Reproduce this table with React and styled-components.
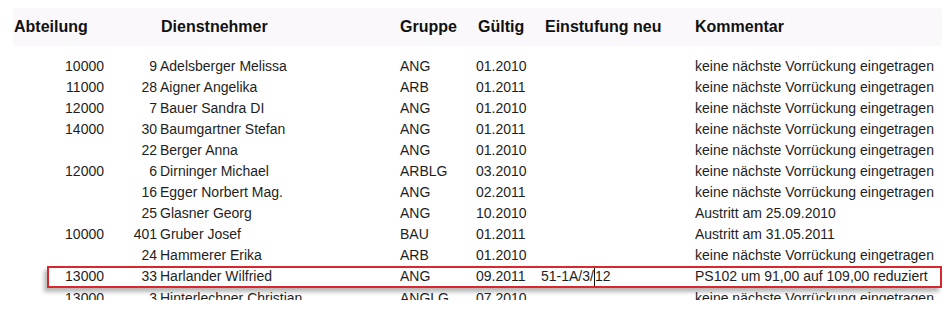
import React from "react";
import styled, { createGlobalStyle } from "styled-components";

const Global = createGlobalStyle`
  html, body { margin: 0; padding: 0; background: #ffffff; }
  body { font-family: "Liberation Sans", Arial, sans-serif; }
`;

const COLS = "91px 53px 243px 76px 65px 154px 1fr";

const Page = styled.div`
  width: 949px;
  height: 300px;
  overflow: hidden;
  padding: 8px 7px 0 13px;
  box-sizing: border-box;
`;

const Header = styled.div`
  display: grid;
  grid-template-columns: ${COLS};
  height: 38px;
  align-items: center;
  background: #fbf8fb;
  font-weight: bold;
  font-size: 16px;
  color: #111111;
`;

const HeadCell = styled.div`
  padding-left: ${(p) => p.$pad || 0}px;
  grid-column: ${(p) => p.$span || "auto"};
  white-space: nowrap;
  padding-bottom: 1px;
`;

const Body = styled.div`
  padding-top: 9.5px;
`;

const Row = styled.div`
  position: relative;
  display: grid;
  grid-template-columns: ${COLS};
  height: 21.1px;
  line-height: 21.1px;
  font-size: 14px;
  color: #1e1e1e;
  white-space: nowrap;

  ${(p) =>
    p.$marked &&
    `
    &::after {
      content: "";
      position: absolute;
      top: 0;
      bottom: 0;
      left: 34px;
      right: 0;
      border: 2px solid #d9272e;
      box-shadow: -3px 4px 4px rgba(0, 0, 0, 0.28);
      pointer-events: none;
    }
  `}
`;

const Num = styled.div`
  text-align: right;
`;

const Name = styled.div`
  padding-left: 3px;
`;

const Cell = styled.div``;

const Caret = styled.span`
  display: inline-block;
  width: 1px;
  height: 19px;
  background: #111;
  vertical-align: middle;
  margin: -2px 0 0 0;
`;

const rows = [
  ["10000", "9", "Adelsberger Melissa", "ANG", "01.2010", "", "keine nächste Vorrückung eingetragen"],
  ["11000", "28", "Aigner Angelika", "ARB", "01.2011", "", "keine nächste Vorrückung eingetragen"],
  ["12000", "7", "Bauer Sandra DI", "ANG", "01.2010", "", "keine nächste Vorrückung eingetragen"],
  ["14000", "30", "Baumgartner Stefan", "ANG", "01.2011", "", "keine nächste Vorrückung eingetragen"],
  ["", "22", "Berger Anna", "ANG", "01.2010", "", "keine nächste Vorrückung eingetragen"],
  ["12000", "6", "Dirninger Michael", "ARBLG", "03.2010", "", "keine nächste Vorrückung eingetragen"],
  ["", "16", "Egger Norbert Mag.", "ANG", "02.2011", "", "keine nächste Vorrückung eingetragen"],
  ["", "25", "Glasner Georg", "ANG", "10.2010", "", "Austritt am 25.09.2010"],
  ["10000", "401", "Gruber Josef", "BAU", "01.2011", "", "Austritt am 31.05.2011"],
  ["", "24", "Hammerer Erika", "ARB", "01.2010", "", "keine nächste Vorrückung eingetragen"],
  ["13000", "33", "Harlander Wilfried", "ANG", "09.2011", "caret", "PS102 um 91,00 auf 109,00 reduziert"],
  ["13000", "3", "Hinterlechner Christian", "ANGLG", "07.2010", "", "keine nächste Vorrückung eingetragen"],
];

export default function App() {
  return (
    <>
      <Global />
      <Page>
        <Header>
          <HeadCell $pad={1}>Abteilung</HeadCell>
          <HeadCell $span="2 / 4" $pad={57}>Dienstnehmer</HeadCell>
          <HeadCell>Gruppe</HeadCell>
          <HeadCell $pad={2}>Gültig</HeadCell>
          <HeadCell $pad={4}>Einstufung neu</HeadCell>
          <HeadCell>Kommentar</HeadCell>
        </Header>
        <Body>
          {rows.map((r, i) => (
            <Row key={i} $marked={r[5] === "caret"}>
              <Num>{r[0]}</Num>
              <Num>{r[1]}</Num>
              <Name>{r[2]}</Name>
              <Cell>{r[3]}</Cell>
              <Cell>{r[4]}</Cell>
              <Cell>
                {r[5] === "caret" ? (
                  <>
                    51-1A/3/<Caret />12
                  </>
                ) : (
                  r[5]
                )}
              </Cell>
              <Cell>{r[6]}</Cell>
            </Row>
          ))}
        </Body>
      </Page>
    </>
  );
}
